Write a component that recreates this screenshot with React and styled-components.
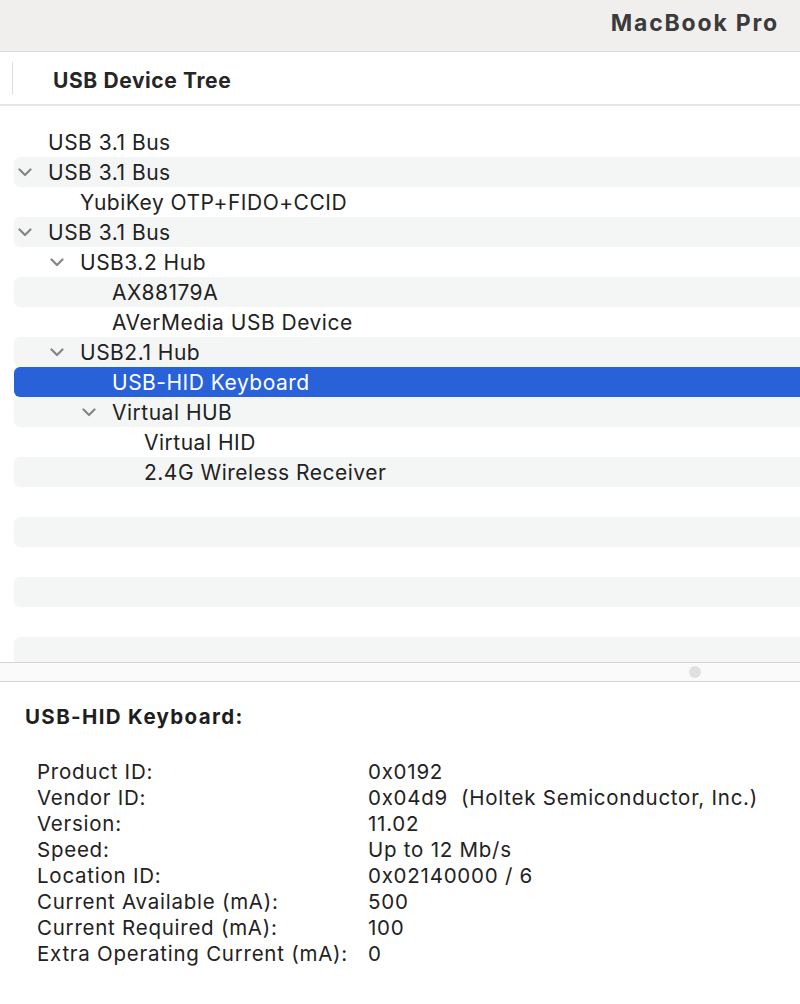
import React from 'react';
import styled, { createGlobalStyle } from 'styled-components';

const GlobalStyle = createGlobalStyle`
  html, body {
    margin: 0;
    padding: 0;
    background: #ffffff;
    overflow: hidden;
  }
  body {
    font-family: Inter, "Liberation Sans", Arial, sans-serif;
    color: #222222;
    -webkit-font-smoothing: antialiased;
  }
`;

const Window = styled.div`
  width: 800px;
  height: 1004px;
  display: flex;
  flex-direction: column;
  background: #ffffff;
`;

const TitleBar = styled.div`
  height: 52px;
  box-sizing: border-box;
  background: #f0efee;
  border-bottom: 1px solid #d8d8d8;
  display: flex;
  justify-content: flex-end;
  align-items: center;
  padding: 0 21px 6px 0;
`;

const MachineName = styled.div`
  font-size: 23px;
  font-weight: 700;
  color: #3b3b3b;
  letter-spacing: 1.8px;
`;

const ColumnHeader = styled.div`
  height: 54px;
  box-sizing: border-box;
  border-bottom: 2px solid #e6e6e6;
  display: flex;
  align-items: center;
`;

const HeaderDivider = styled.div`
  width: 1px;
  height: 32px;
  margin-left: 12px;
  background: #dddddd;
`;

const HeaderTitle = styled.div`
  margin: 5px 0 0 40px;
  font-size: 21px;
  font-weight: 700;
  color: #262626;
  letter-spacing: 0.6px;
`;

const Tree = styled.div`
  height: 556px;
  padding-top: 21px;
  box-sizing: border-box;
  overflow: hidden;
  display: flex;
  flex-direction: column;
`;

const Row = styled.div`
  height: 30px;
  flex: none;
  margin-left: 14px;
  border-radius: 6px 0 0 6px;
  display: flex;
  align-items: center;
  padding-left: ${(p) => p.$indent}px;
  background: ${(p) => (p.$selected ? '#2962d8' : p.$striped ? '#f4f5f5' : 'transparent')};
  color: ${(p) => (p.$selected ? '#ffffff' : '#222222')};
  font-size: 21px;
  letter-spacing: 0.5px;
  white-space: nowrap;
`;

const Chevron = styled.svg`
  width: 14px;
  height: 9px;
  margin-left: -30px;
  margin-right: 16px;
  flex: none;
`;

const Splitter = styled.div`
  height: 20px;
  box-sizing: border-box;
  border-top: 1px solid #d4d4d4;
  border-bottom: 1px solid #d4d4d4;
  background: #fafafa;
  display: flex;
  align-items: center;
  padding-left: 689px;
`;

const SplitterHandle = styled.div`
  width: 12px;
  height: 12px;
  border-radius: 50%;
  background: #e0e0e0;
`;

const Details = styled.div`
  flex: 1;
  padding: 23px 0 0 25px;
`;

const DetailsTitle = styled.div`
  font-size: 20.5px;
  font-weight: 700;
  color: #1e1e1e;
  height: 24px;
  line-height: 24px;
  letter-spacing: 1.35px;
`;

const Properties = styled.div`
  margin: 29px 0 0 12px;
  display: grid;
  grid-template-columns: 331px auto;
  grid-auto-rows: 26px;
  align-items: center;
  font-size: 20.5px;
  color: #222222;
  letter-spacing: 0.75px;
  white-space: nowrap;
`;

const Value = styled.span`
  white-space: pre;
`;

const treeRows = [
  { label: 'USB 3.1 Bus', level: 0 },
  { label: 'USB 3.1 Bus', level: 0, open: true },
  { label: 'YubiKey OTP+FIDO+CCID', level: 1 },
  { label: 'USB 3.1 Bus', level: 0, open: true },
  { label: 'USB3.2 Hub', level: 1, open: true },
  { label: 'AX88179A', level: 2 },
  { label: 'AVerMedia USB Device', level: 2 },
  { label: 'USB2.1 Hub', level: 1, open: true },
  { label: 'USB-HID Keyboard', level: 2, selected: true },
  { label: 'Virtual HUB', level: 2, open: true },
  { label: 'Virtual HID', level: 3 },
  { label: '2.4G Wireless Receiver', level: 3 },
  { label: '' },
  { label: '' },
  { label: '' },
  { label: '' },
  { label: '' },
  { label: '' },
];

const properties = [
  ['Product ID:', '0x0192'],
  ['Vendor ID:', '0x04d9  (Holtek Semiconductor, Inc.)'],
  ['Version:', '11.02'],
  ['Speed:', 'Up to 12 Mb/s'],
  ['Location ID:', '0x02140000 / 6'],
  ['Current Available (mA):', '500'],
  ['Current Required (mA):', '100'],
  ['Extra Operating Current (mA):', '0'],
];

function DisclosureIcon() {
  return (
    <Chevron viewBox="0 0 14 9">
      <path
        d="M1.5 1.5 L7 7 L12.5 1.5"
        fill="none"
        stroke="#858585"
        strokeWidth="2.2"
        strokeLinecap="round"
        strokeLinejoin="round"
      />
    </Chevron>
  );
}

export default function App() {
  return (
    <Window>
      <GlobalStyle />
      <TitleBar>
        <MachineName>MacBook Pro</MachineName>
      </TitleBar>
      <ColumnHeader>
        <HeaderDivider />
        <HeaderTitle>USB Device Tree</HeaderTitle>
      </ColumnHeader>
      <Tree>
        {treeRows.map((row, i) => (
          <Row
            key={i}
            $indent={34 + (row.level || 0) * 32}
            $striped={i % 2 === 1}
            $selected={row.selected}
          >
            {row.open && <DisclosureIcon />}
            {row.label}
          </Row>
        ))}
      </Tree>
      <Splitter>
        <SplitterHandle />
      </Splitter>
      <Details>
        <DetailsTitle>USB-HID Keyboard:</DetailsTitle>
        <Properties>
          {properties.map(([k, v]) => (
            <React.Fragment key={k}>
              <span>{k}</span>
              <Value>{v}</Value>
            </React.Fragment>
          ))}
        </Properties>
      </Details>
    </Window>
  );
}
